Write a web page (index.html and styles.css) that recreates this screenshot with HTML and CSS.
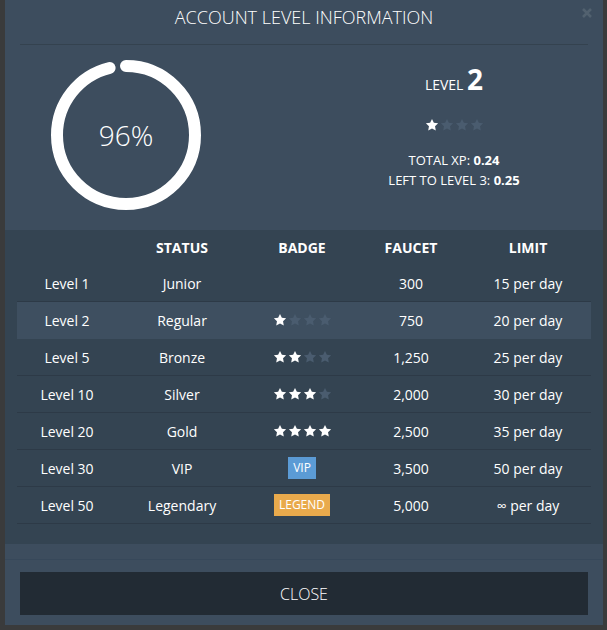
FILE: index.html
```html
<!DOCTYPE html>
<html lang="en">
<head>
  <meta charset="UTF-8" />
  <meta name="viewport" content="width=device-width, initial-scale=1.0"/>
  <title>Account level information</title>
  <link rel="stylesheet" href="styles.css">
</head>
<body>
  <svg width="0" height="0" class="defs">
    <symbol id="star" viewBox="0 0 24 24">
      <path d="M12 1.5l3.2 6.6 7.3 1-5.3 5.1 1.3 7.2L12 18l-6.5 3.4 1.3-7.2L1.5 9.1l7.3-1z"/>
    </symbol>
  </svg>

  <div class="modal">
    <svg class="modal-x" viewBox="0 0 10 10"><path d="M1 1L9 9M9 1L1 9"/></svg>

    <div class="modal-top">
      <h2 class="modal-title">ACCOUNT LEVEL INFORMATION</h2>
      <div class="stats">
        <div class="ring">
          <svg viewBox="0 0 150 150" width="150" height="150">
            <circle cx="75" cy="75" r="69" class="ring-bar" stroke-dasharray="416.2 433.5"/>
          </svg>
          <span class="ring-label">96%</span>
        </div>
        <div class="level-info">
          <div class="level-title">LEVEL <b>2</b></div>
          <div class="stars big">
            <svg class="on"><use href="#star"/></svg><svg><use href="#star"/></svg><svg><use href="#star"/></svg><svg><use href="#star"/></svg>
          </div>
          <div class="xp">TOTAL XP: <b>0.24</b></div>
          <div class="xp">LEFT TO LEVEL 3: <b>0.25</b></div>
        </div>
      </div>
    </div>

    <div class="levels">
      <table>
        <colgroup>
          <col style="width:100px"><col style="width:130px"><col style="width:110px"><col style="width:108px"><col>
        </colgroup>
        <thead>
          <tr><th></th><th>STATUS</th><th>BADGE</th><th>FAUCET</th><th>LIMIT</th></tr>
        </thead>
        <tbody>
          <tr><td>Level 1</td><td>Junior</td><td></td><td>300</td><td>15 per day</td></tr>
          <tr class="current"><td>Level 2</td><td>Regular</td>
            <td><div class="stars"><svg class="on"><use href="#star"/></svg><svg><use href="#star"/></svg><svg><use href="#star"/></svg><svg><use href="#star"/></svg></div></td>
            <td>750</td><td>20 per day</td></tr>
          <tr><td>Level 5</td><td>Bronze</td>
            <td><div class="stars"><svg class="on"><use href="#star"/></svg><svg class="on"><use href="#star"/></svg><svg><use href="#star"/></svg><svg><use href="#star"/></svg></div></td>
            <td>1,250</td><td>25 per day</td></tr>
          <tr><td>Level 10</td><td>Silver</td>
            <td><div class="stars"><svg class="on"><use href="#star"/></svg><svg class="on"><use href="#star"/></svg><svg class="on"><use href="#star"/></svg><svg><use href="#star"/></svg></div></td>
            <td>2,000</td><td>30 per day</td></tr>
          <tr><td>Level 20</td><td>Gold</td>
            <td><div class="stars"><svg class="on"><use href="#star"/></svg><svg class="on"><use href="#star"/></svg><svg class="on"><use href="#star"/></svg><svg class="on"><use href="#star"/></svg></div></td>
            <td>2,500</td><td>35 per day</td></tr>
          <tr><td>Level 30</td><td>VIP</td><td><span class="badge vip">VIP</span></td><td>3,500</td><td>50 per day</td></tr>
          <tr><td>Level 50</td><td>Legendary</td><td><span class="badge legend">LEGEND</span></td><td>5,000</td><td>∞ per day</td></tr>
        </tbody>
      </table>
    </div>

    <div class="modal-footer">
      <div class="footer-inner">
        <button class="close-btn">CLOSE</button>
      </div>
    </div>
  </div>
</body>
</html>
```

FILE: styles.css
```css
body {
  margin: 0;
  padding: 0;
  background: #3a3b3c;
  font-family: "Open Sans", "Liberation Sans", sans-serif;
  color: #ffffff;
  height: 630px;
  overflow: hidden;
}
.defs {
  position: absolute;
}
.modal {
  position: relative;
  margin-left: 5px;
  width: 598px;
  background: #3d4d5e;
}
.modal-x {
  position: absolute;
  top: 8px;
  right: 11px;
  width: 10px;
  height: 10px;
  stroke: #52616f;
  stroke-width: 2.6;
}
.modal-title {
  margin: 0 15px;
  padding: 5px 0 15px;
  border-bottom: 1px solid #34424f;
  font-size: 18px;
  line-height: 24px;
  font-weight: 300;
  text-align: center;
}
.stats {
  display: flex;
  justify-content: space-between;
  padding: 15px 16px 20px 15px;
}
.ring {
  position: relative;
  width: 212px;
  height: 150px;
  display: flex;
  justify-content: center;
  align-items: center;
}
.ring svg {
  transform: rotate(-90deg);
}
.ring-bar {
  fill: none;
  stroke: #ffffff;
  stroke-width: 12;
  stroke-linecap: round;
}
.ring-label {
  position: absolute;
  font-size: 28px;
  font-weight: 300;
}
.level-info {
  width: 266px;
  text-align: center;
  padding-top: 3px;
}
.level-title {
  font-size: 14px;
  line-height: 32px;
}
.level-title b {
  font-size: 28px;
  font-weight: 700;
}
.stars {
  display: flex;
  justify-content: center;
  gap: 1px;
}
.stars svg {
  width: 14px;
  height: 14px;
  fill: #4a5c6f;
}
.stars svg.on {
  fill: #ffffff;
}
.stars.big {
  margin: 17px 0 18px;
}
.xp {
  font-size: 13px;
  line-height: 20px;
}
.levels {
  background: #344452;
  padding: 0 12px 20px;
}
table {
  width: 100%;
  border-collapse: collapse;
  table-layout: fixed;
}
th {
  height: 34px;
  padding: 0;
  font-size: 14px;
  font-weight: 700;
  text-align: center;
  border-bottom: 1px solid #344452;
}
td {
  height: 36px;
  padding: 0;
  font-size: 14px;
  text-align: center;
  border-bottom: 1px solid #2d3a47;
}
tr.current td {
  background: #3e4f60;
  border-bottom-color: #3e4f60;
}
.badge {
  display: inline-block;
  height: 22px;
  line-height: 22px;
  padding: 0 5px;
  font-size: 12px;
}
.badge.vip {
  background: #5b9bd5;
}
.badge.legend {
  background: #e9aa4c;
}
.modal-footer {
  padding-top: 15px;
}
.footer-inner {
  border-top: 1px solid #37485a;
  padding: 12px 15px 10px;
}
.close-btn {
  display: block;
  width: 100%;
  height: 43px;
  background: #222b34;
  color: #ffffff;
  border: none;
  font-family: "Open Sans", "Liberation Sans", sans-serif;
  font-size: 16px;
  font-weight: 300;
  cursor: pointer;
}
```
